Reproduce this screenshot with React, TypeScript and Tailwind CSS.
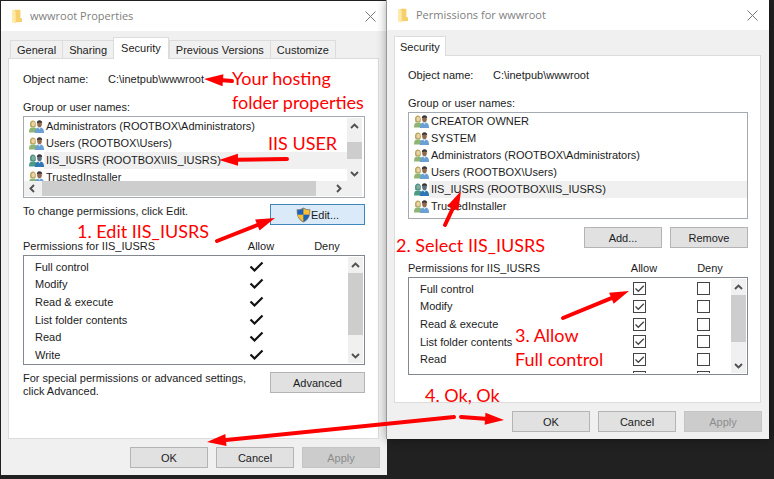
import React from "react";

type User = { name: string; selected?: boolean };

const RIGHTS = ["Full control", "Modify", "Read & execute", "List folder contents", "Read", "Write"];

const MEMBERS: User[] = [
  { name: "Administrators (ROOTBOX\\Administrators)" },
  { name: "Users (ROOTBOX\\Users)" },
  { name: "IIS_IUSRS (ROOTBOX\\IIS_IUSRS)", selected: true },
  { name: "TrustedInstaller" },
];

function FolderIcon() {
  return (
    <svg className="h-[15px] w-[10px] shrink-0" viewBox="0 0 10 15" aria-hidden="true">
      <path d="M0 1.5 4 .8V14L0 13z" fill="#fbe29a" />
      <path d="M3 .8h5.4v8.4H10V13L3.6 13.2z" fill="#f5d06c" />
      <path d="M0 1.5 3.6 2.6V14.6L0 13z" fill="#ffe9a9" />
    </svg>
  );
}

function UsersIcon({ selected }: { selected?: boolean }) {
  return (
    <svg className="h-[13px] w-[15px] shrink-0" viewBox="0 0 15 13" aria-hidden="true">
      <path d="M1 4.2C1 1.5 2.2.4 3.9.4S6.8 1.5 6.8 4.2L6.6 7H1.3z" fill={selected ? "#4f9183" : "#b9a45c"} />
      <ellipse cx="4.2" cy="4.1" rx="1.8" ry="2.4" fill={selected ? "#7fb0a0" : "#ecd3a4"} />
      <path d="M0 12.4C0 9 1 7.3 4 7.3s3.800 1.700 3.800 5.100z" fill={selected ? "#4a9a86" : "#8fb573"} />
      <ellipse cx="10.500" cy="4.300" rx="2.300" ry="2.900" fill={selected ? "#5d6f7c" : "#94694b"} />
      <path d="M7.900 3.600C7.700 1.300 8.800.2 10.500.2s2.800 1.100 2.700 3.200C12 2.400 10 2.200 7.900 3.600z" fill="#3a3533" />
      <path d="M5.800 12.900c0-3.600 1.400-5.300 4.700-5.300s4.500 1.700 4.500 5.300z" fill={selected ? "#2f76b4" : "#6ba0d2"} />
      <path d="m9.200 7.600 1.300 1.800 1.300-1.800z" fill="#dbe8f4" />
    </svg>
  );
}

function ShieldIcon() {
  return (
    <svg className="h-4 w-[15px] shrink-0" viewBox="0 0 15 16" aria-hidden="true">
      <path d="M7.500.4C5.800 1.600 3.500 2.300.7 2.300c-.2 6.200 1.400 10.600 6.800 13.300 5.400-2.700 7-7.100 6.800-13.300-2.800 0-5.100-.7-6.800-1.900z" fill="#7c7f80" />
      <path d="M7.500 1.500v6.300H1.700c-.2-1.500-.2-3-.1-4.600 2.400-.1 4.300-.6 5.900-1.700z" fill="#1d63b8" />
      <path d="M7.500 1.500v6.300h5.800c.2-1.500.2-3 .1-4.600-2.400-.1-4.300-.6-5.900-1.700z" fill="#fbc02e" />
      <path d="M1.700 7.800h5.800v6.800C4.200 12.900 2.300 10.700 1.700 7.800z" fill="#fbc02e" />
      <path d="M13.300 7.800H7.500v6.800c3.300-1.700 5.200-3.900 5.800-6.800z" fill="#1d63b8" />
    </svg>
  );
}

const CHEVRONS = {
  up: "M1 6 4.500 2.500 8 6",
  down: "M1 3 4.500 6.500 8 3",
  left: "M6 1 2.500 4.500 6 8",
  right: "M3 1 6.500 4.500 3 8",
};

function ScrollArrow({ direction }: { direction: keyof typeof CHEVRONS }) {
  return (
    <button type="button" aria-label={`Scroll ${direction}`} className="flex size-4 shrink-0 items-center justify-center">
      <svg className="size-[9px]" viewBox="0 0 9 9" fill="none" stroke="#505050" strokeWidth="1.900" aria-hidden="true">
        <path d={CHEVRONS[direction]} />
      </svg>
    </button>
  );
}

function VerticalScroll({ thumb }: { thumb: string }) {
  return (
    <div className="flex w-[15px] shrink-0 flex-col items-center bg-[#f0f0f0]">
      <ScrollArrow direction="up" />
      <div className="w-full flex-1">
        <div className={`w-full bg-[#cdcdcd] ${thumb}`} />
      </div>
      <ScrollArrow direction="down" />
    </div>
  );
}

function UserList({ users }: { users: User[] }) {
  return (
    <ul className="min-w-0 flex-1 overflow-hidden">
      {users.map((user) => (
        <li key={user.name} className="flex h-[17px] items-center pl-[5px]">
          <UsersIcon selected={user.selected} />
          <span className={`flex-1 pl-0.5 leading-[17px] whitespace-nowrap ${user.selected ? "bg-[#f0f0f0]" : ""}`}>
            {user.name}
          </span>
        </li>
      ))}
    </ul>
  );
}

function Button({ children, disabled, primary, width }: {
  children: React.ReactNode;
  disabled?: boolean;
  primary?: boolean;
  width: string;
}) {
  const tone = disabled
    ? "border-[#c4c4c4] bg-[#cccccc] text-[#8d8d8d]"
    : primary
      ? "border-[#3f86bd] bg-[#dbeaf8]"
      : "border-[#b4b4b4] bg-[#e1e1e1]";
  return (
    <button type="button" disabled={disabled} className={`flex h-[21px] shrink-0 items-center justify-center border ${width} ${tone}`}>
      {children}
    </button>
  );
}

function Mark() {
  return (
    <svg className="mx-auto h-3 w-[15px]" viewBox="0 0 15 12" fill="none" stroke="#111" strokeWidth="2.200" role="img" aria-label="Allowed">
      <path d="M1.500 5.500 5.500 9.500 13.500 1.500" />
    </svg>
  );
}

function Tick({ label, checked }: { label: string; checked?: boolean }) {
  return (
    <span className="relative mx-auto block size-[13px]">
      <input
        type="checkbox"
        aria-label={label}
        defaultChecked={checked}
        className="peer block size-[13px] appearance-none border border-[#444] bg-white"
      />
      <svg className="pointer-events-none absolute inset-0 hidden size-[13px] peer-checked:block" viewBox="0 0 13 13" fill="none" stroke="#444" strokeWidth="1.300" aria-hidden="true">
        <path d="M2.500 6.500 5.300 9.300 10.800 3.700" />
      </svg>
    </span>
  );
}

function Permissions({ editable, height, thumb }: { editable?: boolean; height: string; thumb: string }) {
  return (
    <>
      <div className="mb-0.5 flex pr-[5px]">
        <span className="flex-1">Permissions for IIS_IUSRS</span>
        <span className="w-[66px] text-center">Allow</span>
        <span className="w-[66px] text-center">Deny</span>
      </div>
      <div className={`flex overflow-hidden border border-[#828790] p-px pl-0 ${height}`}>
        <div className="min-w-0 flex-1 overflow-hidden pt-px">
          <table className="h-[106px] w-full table-fixed leading-[14px]" aria-label="Permissions for IIS_IUSRS">
            <colgroup>
              <col />
              <col className="w-[72px]" />
              <col className="w-[56px]" />
            </colgroup>
            <tbody>
              {RIGHTS.map((right) => (
                <tr key={right}>
                  <th scope="row" className="p-0 pl-[11px] text-left font-normal whitespace-nowrap">{right}</th>
                  <td className="p-0">{editable ? <Tick label={`Allow ${right}`} checked={right !== "Write"} /> : <Mark />}</td>
                  <td className="p-0">{editable && <Tick label={`Deny ${right}`} />}</td>
                </tr>
              ))}
            </tbody>
          </table>
        </div>
        <VerticalScroll thumb={thumb} />
      </div>
    </>
  );
}

function Dialog({ title, tabs, children, className }: {
  title: string;
  tabs: string[];
  children: React.ReactNode;
  className: string;
}) {
  return (
    <section aria-label={title} className={`bg-[#f0f0f0] ${className}`}>
      <header className="flex h-[30px] items-center bg-white pr-[11px] pl-[11px]">
        <FolderIcon />
        <h1 className="flex-1 pl-2 font-['Open_Sans','Noto_Sans',sans-serif] text-[11px] text-[#808080]">{title}</h1>
        <button type="button" aria-label="Close">
          <svg className="size-[11px]" viewBox="0 0 11 11" stroke="#777" strokeWidth="1" aria-hidden="true">
            <path d="M.5.5l10 10M10.500.5l-10 10" />
          </svg>
        </button>
      </header>
      <div className="pr-2 pl-[7px]">
        <div role="tablist" className={`flex items-end pt-1.5 ${tabs.length > 1 ? "pl-0.5" : ""}`}>
          {tabs.map((tab) =>
            tab === "Security" ? (
              <button key={tab} type="button" role="tab" aria-selected="true" className={`relative -mb-px border border-b-0 border-[#dcdcdc] bg-white ${tabs.length > 1 ? "h-[22px] px-[7px] pb-0.5" : "h-5 px-[5px]"}`}>
                {tab}
              </button>
            ) : (
              <button key={tab} type="button" role="tab" aria-selected="false" className="h-[18px] border border-r-0 border-b-0 border-[#dcdcdc] px-1.5 last:border-r">
                {tab}
              </button>
            ),
          )}
        </div>
        {children}
      </div>
      <footer className="flex justify-end gap-2 pt-2 pr-[7px] pb-[7px]">
        <Button width="w-[78px]">OK</Button>
        <Button width="w-[78px]">Cancel</Button>
        <Button width="w-[78px]" disabled>Apply</Button>
      </footer>
    </section>
  );
}

function ObjectName() {
  return (
    <dl className="mb-3.5 flex">
      <dt className="w-[85px]">Object name:</dt>
      <dd>C:\inetpub\wwwroot</dd>
    </dl>
  );
}

const ARROWS = [
  { from: [232, 81], to: [204, 79] },
  { from: [287, 159], to: [219, 160] },
  { from: [217, 241], to: [275, 218] },
  { from: [454, 417], to: [207, 442] },
  { from: [461, 417], to: [504, 420] },
  { from: [563, 318], to: [629, 291] },
  { from: [445, 225], to: [461, 191] },
];

function Arrow({ from, to }: { from: number[]; to: number[] }) {
  const length = Math.hypot(to[0] - from[0], to[1] - from[1]);
  const ux = (to[0] - from[0]) / length;
  const uy = (to[1] - from[1]) / length;
  const bx = to[0] - ux * 19;
  const by = to[1] - uy * 19;
  return (
    <g fill="red" stroke="red">
      <line x1={from[0]} y1={from[1]} x2={bx} y2={by} strokeWidth="4" strokeLinecap="round" />
      <polygon stroke="none" points={`${to[0]},${to[1]} ${bx - uy * 6},${by + ux * 6} ${bx + uy * 6},${by - ux * 6}`} />
    </g>
  );
}

function Notes() {
  return (
    <div className="pointer-events-none absolute top-0 left-0 z-20 h-[479px] w-[774px] font-['Lato',sans-serif] text-[18px] leading-6 whitespace-nowrap text-[red]">
      <svg className="absolute inset-0 size-full" viewBox="0 0 774 479" aria-hidden="true">
        {ARROWS.map((arrow, index) => (
          <Arrow key={index} {...arrow} />
        ))}
      </svg>
      <p className="absolute top-[66px] left-[232px]">Your hosting<br />folder properties</p>
      <p className="absolute top-[131px] left-[268px]">IIS USER</p>
      <p className="absolute top-[219px] left-[77px]">1. Edit IIS_IUSRS</p>
      <p className="absolute top-[233px] left-[396px]">2. Select IIS_IUSRS</p>
      <p className="absolute top-[323px] left-[515px]">3. Allow<br />Full control</p>
      <p className="absolute top-[383px] left-[425px]">4. Ok, Ok</p>
    </div>
  );
}

export default function App() {
  return (
    <main className="relative min-h-screen bg-[#212121] font-['Liberation_Sans',Arial,sans-serif] text-[11px] leading-[14px] text-[#1c1c1c]">
      <div className="grid grid-cols-[386fr_382fr] items-start pr-[5px] pl-px">
        <Dialog title="wwwroot Properties" tabs={["General", "Sharing", "Security", "Previous Versions", "Customize"]} className="mt-px">
          <div role="tabpanel" className="border border-[#dcdcdc] bg-white pt-[13px] pr-[13px] pb-10 pl-3.5">
            <ObjectName />
            <h2 className="mb-0.5">Group or user names:</h2>
            <div className="mb-1.5 flex h-[82px] flex-col border border-[#a5a9b0] pt-px pr-0.5 pb-px">
              <div className="flex min-h-0 flex-1">
                <UserList users={MEMBERS} />
                <VerticalScroll thumb="mt-2 h-[17px]" />
              </div>
              <div className="flex h-[15px] items-center bg-[#f0f0f0] pr-4">
                <ScrollArrow direction="left" />
                <div className="h-full flex-1 pr-3.5 pl-0.5">
                  <div className="h-full bg-[#cdcdcd]" />
                </div>
                <ScrollArrow direction="right" />
              </div>
            </div>
            <div className="mb-3.5 flex justify-between">
              <p>To change permissions, click Edit.</p>
              <Button width="w-[95px]" primary><ShieldIcon />Edit...</Button>
            </div>
            <Permissions height="h-[110px]" thumb="h-[62px]" />
            <div className="mt-[7px] flex justify-between">
              <p className="leading-[13px]">For special permissions or advanced settings,<br />click Advanced.</p>
              <Button width="w-[95px]">Advanced</Button>
            </div>
          </div>
        </Dialog>
        <Dialog title="Permissions for wwwroot" tabs={["Security"]} className="relative z-10 shadow-[-1px_0_0_#999,0_0_10px_rgba(0,0,0,0.4)]">
          <div role="tabpanel" className="border border-[#dcdcdc] bg-white pt-3 pr-3 pb-[27px] pl-[13px]">
            <ObjectName />
            <h2 className="mb-0.5">Group or user names:</h2>
            <div className="mb-2 flex h-[107px] border border-[#a5a9b0]">
              <UserList users={[{ name: "CREATOR OWNER" }, { name: "SYSTEM" }, ...MEMBERS]} />
            </div>
            <div className="mb-[13px] flex justify-end gap-2">
              <Button width="w-[78px]">Add...</Button>
              <Button width="w-[78px]">Remove</Button>
            </div>
            <Permissions height="h-[98px]" thumb="h-[47px]" editable />
          </div>
        </Dialog>
      </div>
      <Notes />
    </main>
  );
}
